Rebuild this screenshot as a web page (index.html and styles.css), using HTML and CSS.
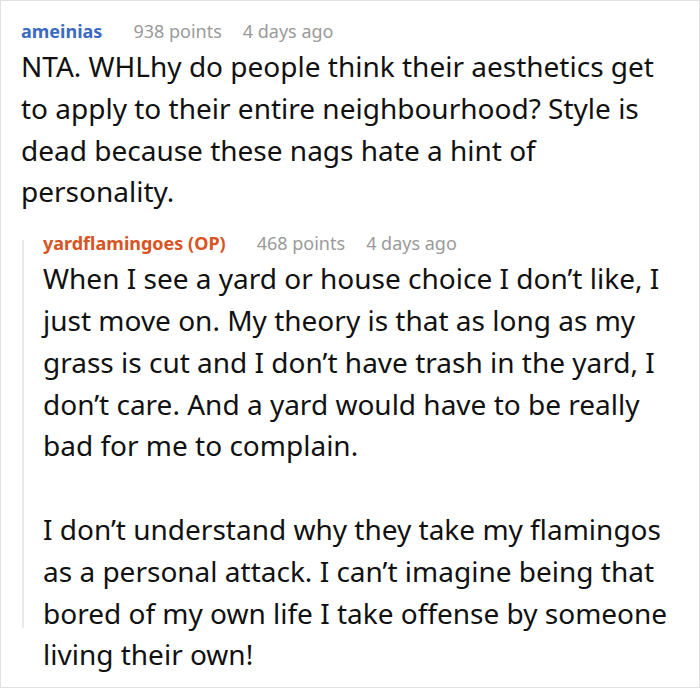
FILE: index.html
```html
<!DOCTYPE html>
<html>
<head>
<meta charset="utf-8">
<link rel="stylesheet" href="styles.css">
</head>
<body>
<div class="frame">
  <div class="comment">
    <div class="meta">
      <span class="user user-blue">ameinias</span>
      <span class="info">938 points</span>
      <span class="info">4 days ago</span>
    </div>
    <div class="text">
      <p>NTA. WHLhy do people think their aesthetics get to apply to their entire neighbourhood? Style is dead because these nags hate a hint of personality.</p>
    </div>
    <div class="reply">
      <div class="meta">
        <span class="user user-orange">yardflamingoes (OP)</span>
        <span class="info">468 points</span>
        <span class="info">4 days ago</span>
      </div>
      <div class="text">
        <p>When I see a yard or house choice I don’t like, I just move on. My theory is that as long as my grass is cut and I don’t have trash in the yard, I don’t care. And a yard would have to be really bad for me to complain.</p>
        <p>I don’t understand why they take my flamingos as a personal attack. I can’t imagine being that bored of my own life I take offense by someone living their own!</p>
      </div>
    </div>
  </div>
</div>
</body>
</html>
```
FILE: styles.css
```css
html, body {
  margin: 0;
  padding: 0;
  background: #fff;
}
.frame {
  box-sizing: border-box;
  width: 700px;
  height: 688px;
  border: 1px solid #e2e2e2;
  overflow: hidden;
  font-family: "Noto Sans", sans-serif;
  color: #111;
}
.comment {
  padding: 17px 14px 0 20px;
}
.meta {
  display: flex;
  gap: 21px;
  font-size: 18px;
  line-height: 26px;
}
.user {
  font-weight: bold;
  margin-right: 10px;
}
.user-blue { color: #3a6bc1; }
.user-orange { color: #d85423; }
.info { color: #9a9a9a; }
.text {
  margin-top: 2px;
  font-size: 28px;
  line-height: 41.8px;
}
.text p {
  margin: 0;
}
.text p + p {
  margin-top: 41.8px;
}
.reply {
  position: relative;
  margin-top: 17px;
  padding-left: 22px;
}
.reply::before {
  content: "";
  position: absolute;
  left: 1px;
  top: 10px;
  bottom: 48px;
  width: 2px;
  background: #e8e8e8;
}
```
